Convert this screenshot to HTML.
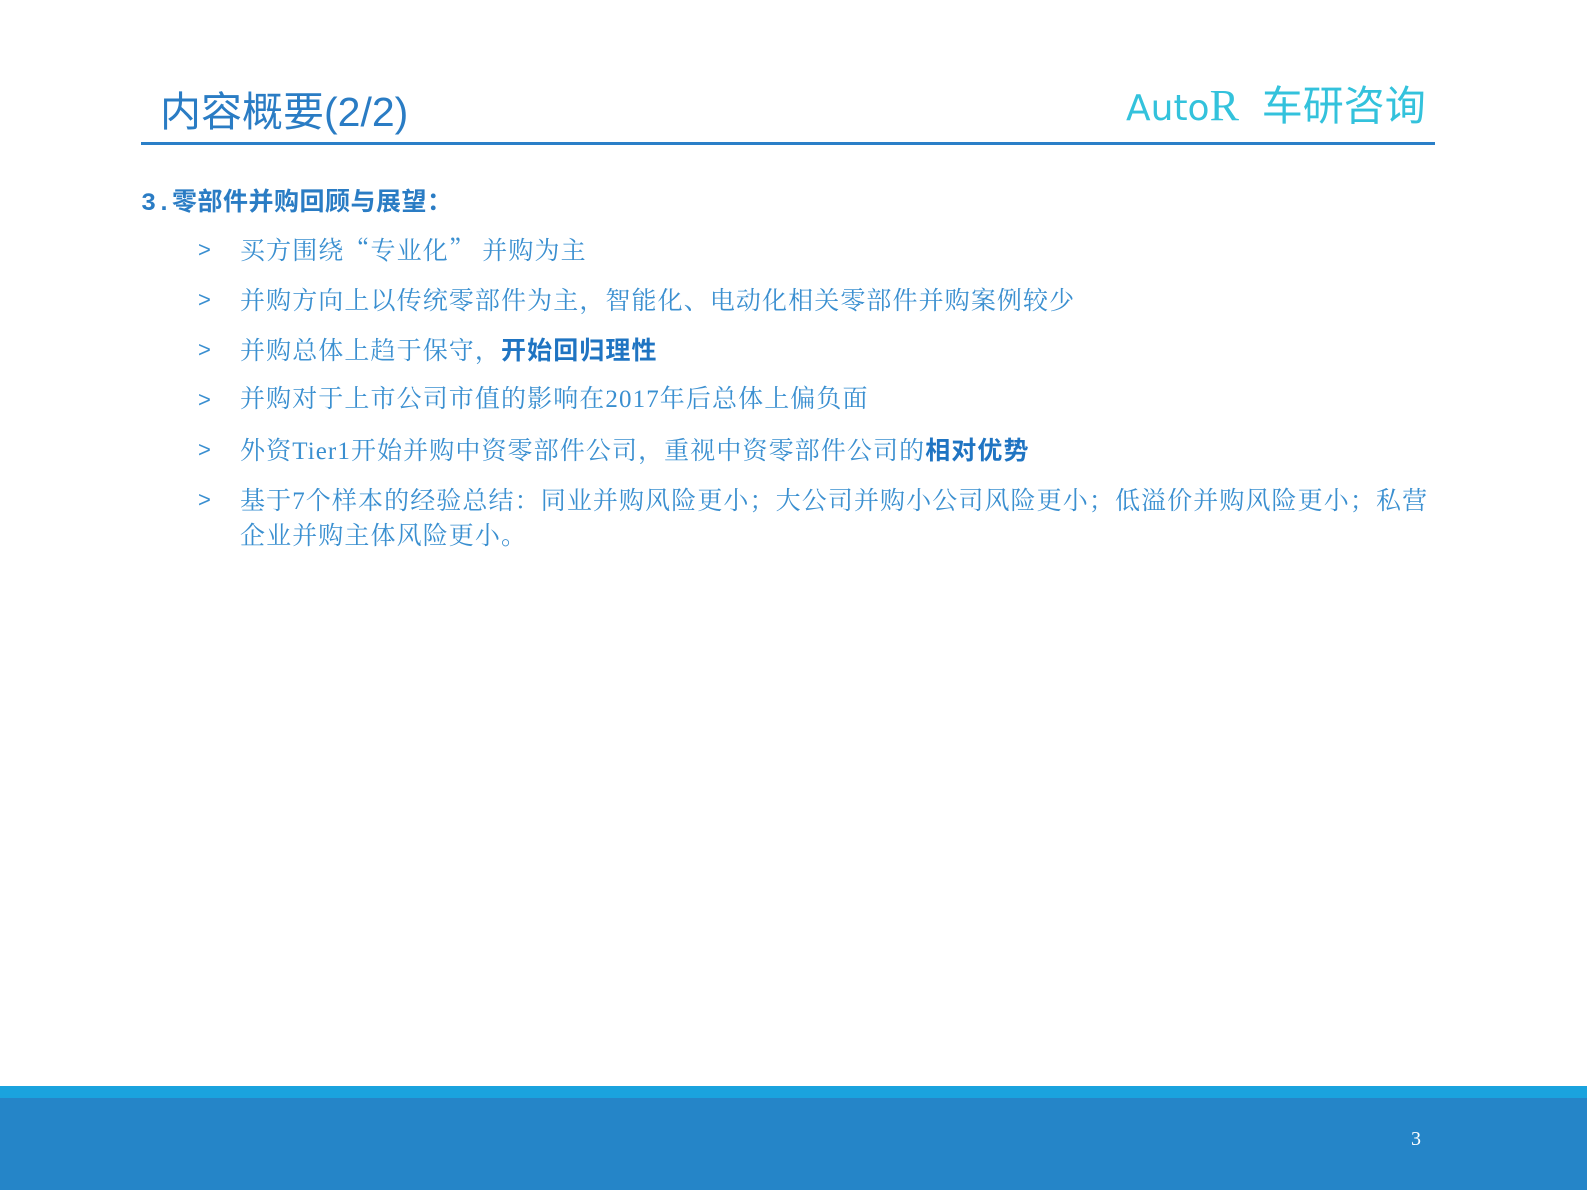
<!DOCTYPE html>
<html><head><meta charset="utf-8"><style>
*{margin:0;padding:0}
body{width:1587px;height:1190px;position:relative;background:#fff;overflow:hidden;font-family:"Liberation Serif","Noto Serif CJK SC",serif}
.title{position:absolute;left:160px;top:84px;font-family:"Liberation Sans","Noto Sans CJK SC",sans-serif;font-size:41px;color:#2a7cc4;line-height:56px}
.logo{position:absolute;left:1126px;top:78px;font-family:"Liberation Sans","Noto Sans CJK SC",sans-serif;font-size:41px;color:#33c2dc;line-height:56px;white-space:nowrap}
.logo .a{font-family:"DejaVu Sans",sans-serif;font-size:36px;font-weight:normal}
.logo .r{font-family:"Liberation Serif",serif;font-size:44px}
.rule{position:absolute;left:141px;width:1294px;top:142px;height:3px;background:#2a7fc8}
.h{position:absolute;left:141px;top:189px;font-size:25px;font-weight:bold;color:#2a7cc4;line-height:30px;font-family:"Liberation Mono","Noto Sans CJK SC",sans-serif;letter-spacing:0.5px}
.li{position:absolute;left:240px;font-size:25px;letter-spacing:1.1px;color:#3a8fd0;line-height:35px;white-space:nowrap}
.li:before{content:">";position:absolute;left:-42px;font-family:"Liberation Sans",sans-serif;font-size:22px}
.li b{color:#1f74c2;font-family:"Liberation Sans","Noto Sans CJK SC",sans-serif}
.c{font-family:"Noto Serif CJK SC",serif}
.band1{position:absolute;left:0;top:1086px;width:1587px;height:12px;background:#1aa3de}
.band2{position:absolute;left:0;top:1098px;width:1587px;height:92px;background:#2585c8}
.pn{position:absolute;left:1411px;top:1128px;color:#fff;font-size:20px}
</style></head><body>
<div class="title">内容概要(2/2)</div>
<div class="logo"><span class="a">Auto</span><span class="r">R</span>&nbsp; 车研咨询</div>
<div class="rule"></div>
<div class="h">3.零部件并购回顾与展望：</div>
<div class="li" style="top:232px">买方围绕<span class="c">“</span>专业化<span class="c">”</span> 并购为主</div>
<div class="li" style="top:282px">并购方向上以传统零部件为主<span class="c">，</span>智能化、电动化相关零部件并购案例较少</div>
<div class="li" style="top:332px">并购总体上趋于保守<span class="c">，</span><b>开始回归理性</b></div>
<div class="li" style="top:382px">并购对于上市公司市值的影响在2017年后总体上偏负面</div>
<div class="li" style="top:432px">外资Tier1开始并购中资零部件公司<span class="c">，</span>重视中资零部件公司的<b>相对优势</b></div>
<div class="li" style="top:482px">基于7个样本的经验总结<span class="c">：</span>同业并购风险更小<span class="c">；</span>大公司并购小公司风险更小<span class="c">；</span>低溢价并购风险更小<span class="c">；</span>私营<br>企业并购主体风险更小。</div>
<div class="band1"></div><div class="band2"></div>
<div class="pn">3</div>
</body></html>
